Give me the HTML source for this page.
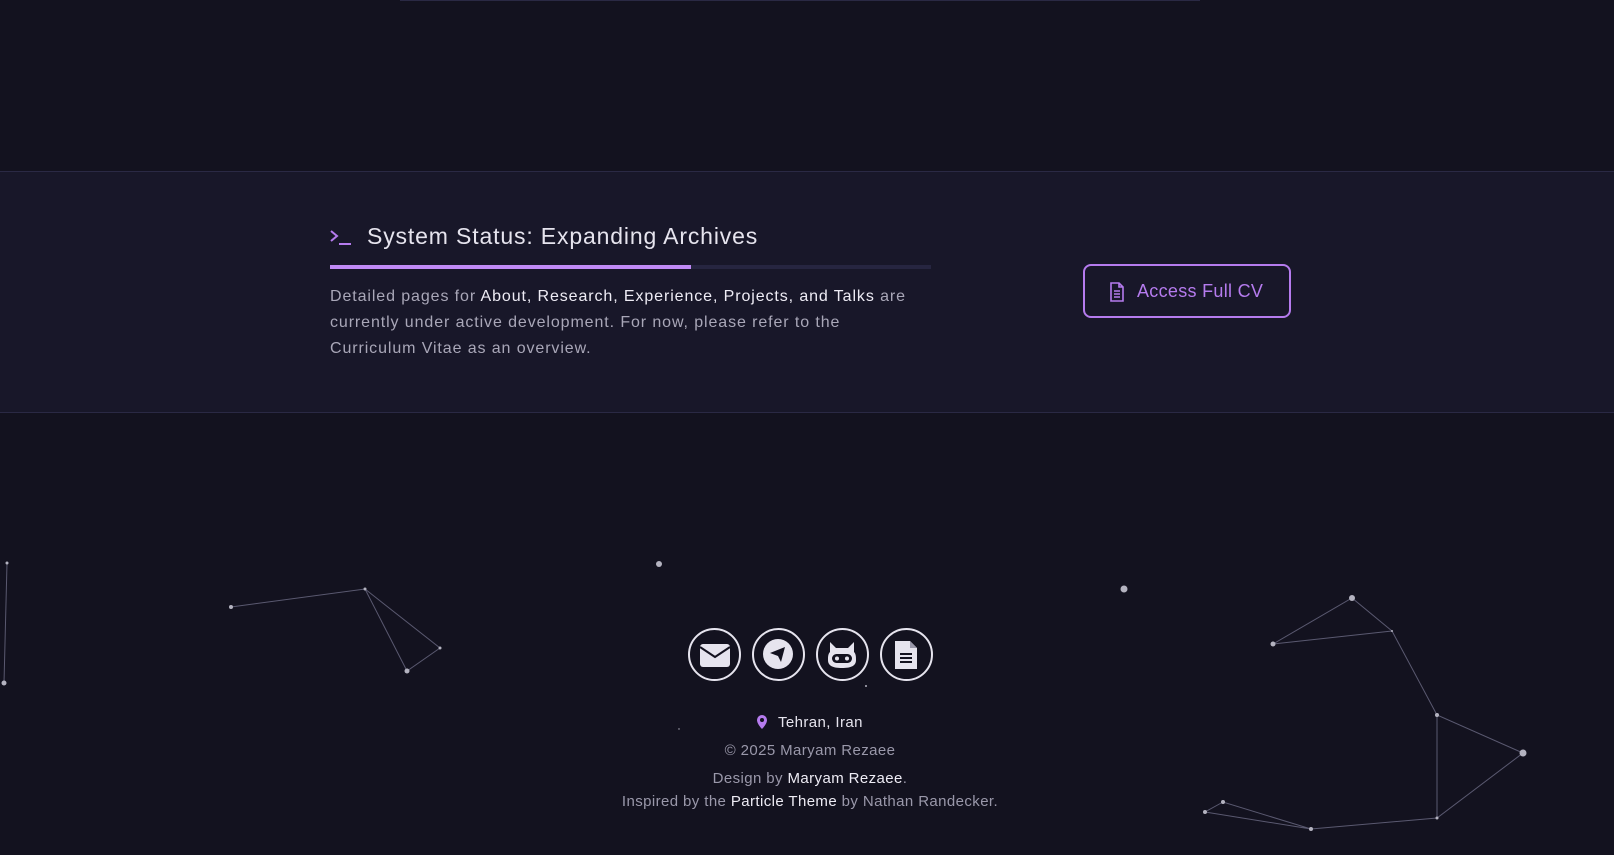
<!DOCTYPE html>
<html><head><meta charset="utf-8"><style>
body{margin:0;width:1614px;height:855px;background:#13121f;font-family:"Liberation Sans",sans-serif;position:relative;overflow:hidden}
.band{position:absolute;left:0;top:171px;width:1614px;height:240px;background:#181729;border-top:1px solid #2a2944;border-bottom:1px solid #2a2944}
.t{position:absolute;white-space:nowrap}
svg{position:absolute;left:0;top:0}
.c{position:absolute;top:628px;width:53px;height:53px;border:2px solid #e6e4ee;border-radius:50%;box-sizing:border-box}
.f{letter-spacing:0.4px}
</style></head><body>
<div style="position:absolute;left:400px;top:0;width:800px;height:1px;background:#2a2944"></div>
<div class="band"></div>
<svg width="1614" height="855">
<g stroke="#5a5970" stroke-width="1" fill="none">
<line x1="7" y1="563" x2="4" y2="683"/>
<polyline points="231,607 365,589 440,648 407,671 365,589"/>
<polyline points="1273,644 1352,598 1392,631 1273,644"/>
<polyline points="1392,631 1437,715 1523,753 1437,818 1311,829 1223,802 1205,812 1311,829"/>
<line x1="1437" y1="715" x2="1437" y2="818"/>
</g>
<g fill="#b4b3c0">
<circle cx="7" cy="563" r="1.5"/><circle cx="4" cy="683" r="2.5"/><circle cx="231" cy="607" r="2"/><circle cx="365" cy="589" r="1.5"/><circle cx="440" cy="648" r="1.5"/><circle cx="407" cy="671" r="2.5"/><circle cx="659" cy="564" r="3"/><circle cx="1124" cy="589" r="3.5"/><circle cx="1352" cy="598" r="3"/><circle cx="1273" cy="644" r="2.5"/><circle cx="1392" cy="631" r="1"/><circle cx="1437" cy="715" r="2"/><circle cx="1523" cy="753" r="3.5"/><circle cx="1437" cy="818" r="1.5"/><circle cx="1311" cy="829" r="2"/><circle cx="1223" cy="802" r="2"/><circle cx="1205" cy="812" r="2"/><circle cx="866" cy="686" r="1"/><circle cx="679" cy="729" r="0.7"/>
</g>
<path d="M331 231l6 5-6 5" stroke="#b57bee" stroke-width="2" fill="none"/><rect x="339" y="243" width="12" height="2" fill="#b57bee"/>
<rect x="330" y="265" width="601" height="4" fill="#262540"/>
<rect x="330" y="265" width="361" height="4" fill="#c08af6"/>
</svg>
<div class="t" style="left:367px;top:223px;font-size:23px;letter-spacing:0.85px;color:#e6e4ee">System Status: Expanding Archives</div>
<div class="t" style="left:330px;top:284px;font-size:16px;line-height:26px;letter-spacing:0.9px;color:#a9a7b8;white-space:normal;width:585px">Detailed pages for <span style="color:#eeecf5">About, Research, Experience, Projects, and Talks</span> are currently under active development. For now, please refer to the Curriculum Vitae as an overview.</div>
<div style="position:absolute;left:1083px;top:264px;width:208px;height:54px;box-sizing:border-box;border:2px solid #b57bee;border-radius:8px"></div>
<svg style="left:1109px;top:282px" width="16" height="20" viewBox="0 0 16 20"><path d="M2 1h8l4 4v14H2z M10 1v4h4 M5 9h6M5 12h6M5 15h6" stroke="#b57bee" stroke-width="1.6" fill="none"/></svg>
<div class="t" style="left:1137px;top:281px;font-size:18px;letter-spacing:0.3px;color:#b57bee">Access Full CV</div>
<div class="c" style="left:688px"></div><div class="c" style="left:752px"></div><div class="c" style="left:816px"></div><div class="c" style="left:880px"></div>
<svg style="left:699px;top:642px" width="32" height="26" viewBox="0 0 32 26"><rect x="1" y="2" width="30" height="23" rx="3" fill="#e6e4ee"/><path d="M1 5l15 10 15-10" stroke="#13121f" stroke-width="2" fill="none"/></svg>
<svg style="left:763px;top:639px" width="30" height="30" viewBox="0 0 30 30"><circle cx="15" cy="15" r="15" fill="#e6e4ee"/><path d="M7 14l15-6-4 15-3-6z" fill="#13121f"/></svg>
<svg style="left:827px;top:641px" width="30" height="28" viewBox="0 0 30 28"><path d="M3 1l6 6h12l6-6v10c2 2 2 5 2 8 0 6-5 8-14 8S1 25 1 19c0-3 0-6 2-8z" fill="#e6e4ee"/><rect x="5" y="13" width="20" height="9" rx="4.5" fill="#13121f"/><circle cx="10" cy="17.5" r="2" fill="#e6e4ee"/><circle cx="20" cy="17.5" r="2" fill="#e6e4ee"/></svg>
<svg style="left:894px;top:641px" width="24" height="28" viewBox="0 0 24 28"><path d="M1 0h15l7 7v21H1z" fill="#e6e4ee"/><path d="M16 0v7h7" fill="#9a98aa"/><path d="M6 13h12M6 17h12M6 21h12" stroke="#13121f" stroke-width="2"/></svg>
<svg style="left:757px;top:715px" width="10" height="14" viewBox="0 0 10 14"><path d="M5 0a5 5 0 0 1 5 5c0 4-5 9-5 9S0 9 0 5a5 5 0 0 1 5-5z" fill="#b57bee"/><circle cx="5" cy="5" r="2" fill="#13121f"/></svg>
<div class="t f" style="left:778px;top:714px;font-size:15px;color:#e6e4ee">Tehran, Iran</div>
<div class="t f" style="left:0;width:1620px;text-align:center;top:742px;font-size:15px;color:#9a98aa">© 2025 Maryam Rezaee</div>
<div class="t f" style="left:0;width:1620px;text-align:center;top:770px;font-size:15px;color:#9a98aa">Design by <span style="color:#eeecf5">Maryam Rezaee</span>.</div>
<div class="t f" style="left:0;width:1620px;text-align:center;top:793px;font-size:15px;color:#9a98aa">Inspired by the <span style="color:#eeecf5">Particle Theme</span> by Nathan Randecker.</div>
</body></html>
